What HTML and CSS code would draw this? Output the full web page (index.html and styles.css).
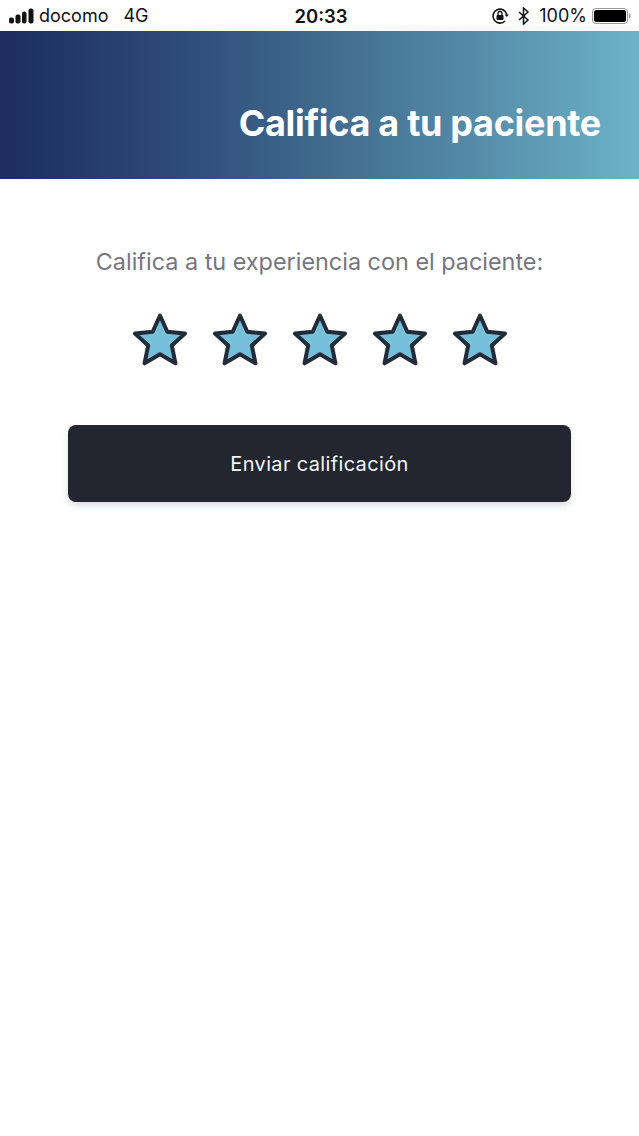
FILE: index.html
```html
<!DOCTYPE html>
<html lang="es">
<head>
<meta charset="utf-8">
<title>Califica a tu paciente</title>
<link rel="stylesheet" href="styles.css">
</head>
<body>
<div class="status">
  <div class="status-left">
    <svg class="signal" width="25" height="16" viewBox="0 0 25 16"><rect x="0" y="9.500" width="5" height="6" rx="2"/><rect x="6.500" y="6.500" width="5" height="9" rx="2"/><rect x="13" y="3.500" width="4.500" height="12" rx="2"/><rect x="19.500" y="0.500" width="5" height="15" rx="2"/></svg>
    <span class="carrier">docomo</span>
    <span class="net">4G</span>
  </div>
  <div class="clock">20:33</div>
  <div class="status-right">
    <svg class="lock" width="18" height="18" viewBox="0 0 18 18"><path d="M15.800 7.500A7 7 0 1 0 14 14" fill="none" stroke="#111" stroke-width="1.600"/><path d="M13.600 7.500h4.300l-2.100 2.600z" fill="#111"/><rect x="5.500" y="8" width="7" height="5" rx="1" fill="#111"/><path d="M7 8V6.500a2 2 0 0 1 4 0V8" fill="none" stroke="#111" stroke-width="1.300"/></svg>
    <svg class="bt" width="12" height="18" viewBox="0 0 12 18"><path d="M1 5l9 8-4.500 4V1L10 5l-9 8" fill="none" stroke="#111" stroke-width="1.500"/></svg>
    <span class="pct">100%</span>
    <svg class="battery" width="39" height="18" viewBox="0 0 39 18"><rect x="0.500" y="1.500" width="35" height="15" rx="3.500" fill="none" stroke="#999"/><rect x="2" y="3" width="32" height="12" rx="2.500" fill="#000"/><rect x="37" y="6.500" width="1.500" height="5" rx="0.700" fill="#999"/></svg>
  </div>
</div>
<header class="hero">
  <h1 class="title">Califica a tu paciente</h1>
</header>
<main class="content">
  <p class="prompt">Califica a tu experiencia con el paciente:</p>
  <div class="stars">
    <svg class="star" viewBox="0 0 56 54"><path d="M28 2.500l7.300 16.300 17.700 1.800-13.200 12 3.700 17.700-15.500-9.100-15.500 9.100 3.700-17.700L3 20.600l17.700-1.800z"/></svg>
    <svg class="star" viewBox="0 0 56 54"><path d="M28 2.500l7.300 16.300 17.700 1.800-13.200 12 3.700 17.700-15.500-9.100-15.500 9.100 3.700-17.700L3 20.600l17.700-1.800z"/></svg>
    <svg class="star" viewBox="0 0 56 54"><path d="M28 2.500l7.300 16.300 17.700 1.800-13.200 12 3.700 17.700-15.500-9.100-15.500 9.100 3.700-17.700L3 20.600l17.700-1.800z"/></svg>
    <svg class="star" viewBox="0 0 56 54"><path d="M28 2.500l7.300 16.300 17.700 1.800-13.200 12 3.700 17.700-15.500-9.100-15.500 9.100 3.700-17.700L3 20.600l17.700-1.800z"/></svg>
    <svg class="star" viewBox="0 0 56 54"><path d="M28 2.500l7.300 16.300 17.700 1.800-13.200 12 3.700 17.700-15.500-9.100-15.500 9.100 3.700-17.700L3 20.600l17.700-1.800z"/></svg>
  </div>
  <button class="submit">Enviar calificación</button>
</main>
</body>
</html>
```
FILE: styles.css
```css
* { box-sizing: border-box; }
html, body { margin: 0; padding: 0; }
body {
  width: 639px;
  height: 1136px;
  background: #fff;
  font-family: "Inter", "Liberation Sans", sans-serif;
  overflow: hidden;
}
.status {
  height: 31px;
  display: flex;
  align-items: center;
  justify-content: space-between;
  position: relative;
  padding: 0 8px 0 9px;
  color: #111;
  font-size: 18px;
}
.status-left, .status-right { display: flex; align-items: center; }
.signal { fill: #111; margin-right: 5px; }
.net { margin-left: 15px; }
.clock {
  position: absolute;
  left: 3px;
  right: 0;
  text-align: center;
  font-weight: 600;
  font-size: 18.500px;
}
.lock { margin-right: 9px; }
.bt { margin-right: 9px; }
.pct { margin-right: 5px; }
.hero {
  height: 148px;
  display: flex;
  align-items: center;
  justify-content: flex-end;
  padding: 36px 38px 0 0;
  background: linear-gradient(90deg, #1c2d5e 0%, #2e4b78 28%, #4a7a9a 62%, #6db2c8 100%);
}
.title {
  margin: 0;
  color: #fff;
  font-size: 36px;
  font-weight: 700;
  line-height: 1;
  letter-spacing: -0.300px;
}
.content {
  display: flex;
  flex-direction: column;
  align-items: center;
  padding: 71px 68px 0;
}
.prompt {
  margin: 0;
  color: #76767e;
  font-size: 23.400px;
  line-height: 24px;
  white-space: nowrap;
}
.stars {
  display: flex;
  gap: 24px;
  margin-top: 39px;
}
.star {
  width: 56px;
  height: 54px;
  display: block;
  fill: #76bfda;
  stroke: #222b38;
  stroke-width: 4;
  stroke-linejoin: round;
}
.submit {
  width: 503px;
  height: 77px;
  margin-top: 58px;
  border: 0;
  border-radius: 8px;
  background: #23262f;
  color: #f5f5f7;
  font-family: inherit;
  font-size: 20px;
  letter-spacing: 0.350px;
  box-shadow: 0 4px 6px rgba(80, 90, 110, 0.200);
}
```
